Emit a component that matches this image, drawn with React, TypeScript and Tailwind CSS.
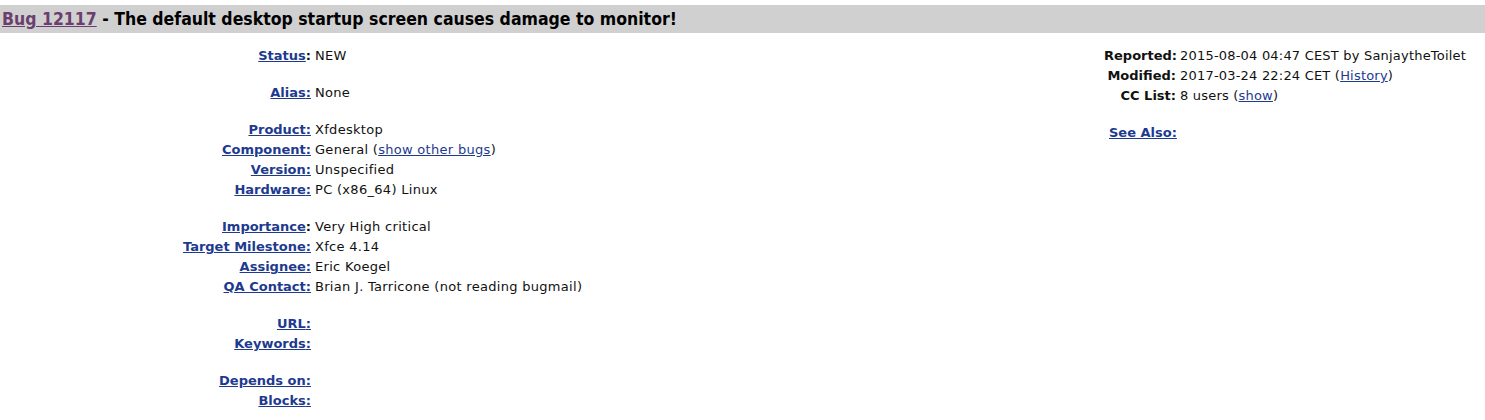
import React from "react";

const LINK = "text-[#1d3a8f] underline";

type Row = { label: string; colonOutside?: boolean; value?: React.ReactNode } | "spacer";

const leftRows: Row[] = [
  { label: "Status", colonOutside: true, value: "NEW" },
  "spacer",
  { label: "Alias", value: "None" },
  "spacer",
  { label: "Product", value: "Xfdesktop" },
  {
    label: "Component",
    value: (
      <>
        General (<a className={LINK}>show other bugs</a>)
      </>
    ),
  },
  { label: "Version", value: "Unspecified" },
  { label: "Hardware", value: "PC (x86_64) Linux" },
  "spacer",
  { label: "Importance", colonOutside: true, value: "Very High critical" },
  { label: "Target Milestone", value: "Xfce 4.14" },
  { label: "Assignee", value: "Eric Koegel" },
  { label: "QA Contact", value: "Brian J. Tarricone (not reading bugmail)" },
  "spacer",
  { label: "URL", value: "" },
  { label: "Keywords", value: "" },
  "spacer",
  { label: "Depends on", value: "" },
  { label: "Blocks", value: "" },
];

export default function App() {
  return (
    <div
      className="w-[1485px] h-[420px] bg-white text-[#111] overflow-hidden"
      style={{ fontFamily: '"DejaVu Sans", Verdana, sans-serif' }}
    >
      <div className="mt-[5px] h-[28px] bg-[#d0d0d0] flex items-center pl-[2px]">
        <span
          className="text-[17.5px] font-bold text-black whitespace-nowrap"
          style={{ fontFamily: '"DejaVu Sans Condensed", "DejaVu Sans", sans-serif' }}
        >
          <a className="text-[#6a3f6e] underline">Bug 12117</a> - The default desktop startup screen causes damage to monitor!
        </span>
      </div>
      <div className="flex mt-[13px] text-[13px]">
        <div className="w-[1100px]">
          {leftRows.map((r, i) =>
            r === "spacer" ? (
              <div key={i} className="h-[17px]" />
            ) : (
              <div key={i} className="flex h-[20px] items-center">
                <div className="w-[311px] text-right font-bold whitespace-nowrap">
                  {r.colonOutside ? (
                    <>
                      <a className={LINK}>{r.label}</a>:
                    </>
                  ) : (
                    <a className={LINK}>{r.label}:</a>
                  )}
                </div>
                <div className="pl-[4px] whitespace-nowrap tracking-[0.3px]">{r.value}</div>
              </div>
            )
          )}
        </div>
        <div className="flex flex-col ml-[4px]">
          <div className="flex h-[20px] items-center">
            <div className="w-[72px] text-right font-bold">Reported:</div>
            <div className="pl-[4px] whitespace-nowrap tracking-[0.2px]">2015-08-04 04:47 CEST by SanjaytheToilet</div>
          </div>
          <div className="flex h-[20px] items-center">
            <div className="w-[72px] text-right font-bold">Modified:</div>
            <div className="pl-[4px] whitespace-nowrap tracking-[0.2px]">
              2017-03-24 22:24 CET (<a className={LINK}>History</a>)
            </div>
          </div>
          <div className="flex h-[20px] items-center">
            <div className="w-[72px] text-right font-bold">CC List:</div>
            <div className="pl-[4px] whitespace-nowrap tracking-[0.2px]">
              8 users (<a className={LINK}>show</a>)
            </div>
          </div>
          <div className="h-[17px]" />
          <div className="flex h-[20px] items-center pl-[5px]">
            <a className={LINK + " font-bold"}>See Also:</a>
          </div>
        </div>
      </div>
    </div>
  );
}
